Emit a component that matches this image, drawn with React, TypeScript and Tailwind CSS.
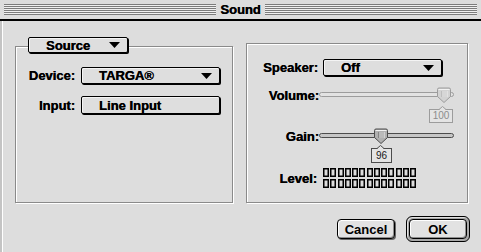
import React from 'react';

// Small black down-pointing triangle used by the popup menus
const Arrow = () => (
  <svg width="11" height="6" viewBox="0 0 11 6" className="shrink-0">
    <path d="M0 0H11L5.5 6Z" fill="#000" />
  </svg>
);

interface PopupProps {
  label: string;
  className: string;
  arrow?: boolean;
}

const Popup: React.FC<PopupProps> = ({ label, className, arrow = true }) => (
  <div
    className={`flex items-center justify-between pl-[17px] pr-[7px] bg-[#dedede] border border-black rounded-[2px] shadow-[1px_1px_0_#000,inset_1px_1px_0_#f4f4f4] ${className}`}
  >
    <span className="leading-none">{label}</span>
    {arrow && <Arrow />}
  </div>
);

const Thumb = ({ disabled }: { disabled?: boolean }) => {
  const stroke = disabled ? '#9c9c9c' : '#4c4c4c';
  const fill = disabled ? '#d2d2d2' : '#b0b0b0';
  const grip = disabled ? '#a8a8a8' : '#5a5a5a';
  return (
    <svg width="16" height="16" viewBox="0 0 16 16">
      <path d="M1.5 2.5Q1.5 1 3 1H13Q14.5 1 14.5 2.5V9.5L8 15.5L1.5 9.5Z" fill={fill} stroke={stroke} />
      <path d="M2.5 2.5H13.5" stroke="#f2f2f2" />
      <path d="M6 4V10M8 4V10M10 4V10" stroke={grip} />
      <path d="M7 4V10M9 4V10M11 4V10" stroke="#efefef" />
    </svg>
  );
};

interface SliderProps {
  value: number;
  disabled?: boolean;
  thumbClass: string;
  boxClass: string;
  notchClass: string;
}

// Horizontal slider with its value tag hanging under the thumb
const Slider: React.FC<SliderProps> = ({ value, disabled, thumbClass, boxClass, notchClass }) => (
  <div className="relative w-[135px] h-[16px]">
    <div
      className={`absolute left-0 right-0 top-[5px] h-[5px] rounded-full border ${
        disabled ? 'border-[#9c9c9c] bg-[#e2e2e2]' : 'border-[#4c4c4c] bg-[#c6c6c6]'
      }`}
    />
    <div className={`absolute top-0 ${thumbClass}`}>
      <Thumb disabled={disabled} />
    </div>
    <div
      className={`absolute flex items-center justify-center border bg-[#e4e4e4] font-['Liberation_Sans',Arial,sans-serif] font-normal text-[10px] leading-none [text-shadow:none] ${
        disabled ? 'border-[#9c9c9c] text-[#8c8c8c]' : 'border-[#4c4c4c] text-[#1a1a1a]'
      } ${boxClass}`}
    >
      {value}
    </div>
    <svg width="7" height="4" viewBox="0 0 7 4" className={`absolute ${notchClass}`}>
      <path d="M0 4L3.5 0.5L7 4Z" fill="#e4e4e4" />
      <path d="M0 3.5L3.5 0.5L7 3.5" fill="none" stroke={disabled ? '#9c9c9c' : '#4c4c4c'} />
    </svg>
  </div>
);

const Stripes = () => (
  <div className="flex-1 h-[11px] bg-[repeating-linear-gradient(to_bottom,#7c7c7c_0px,#7c7c7c_1px,#f0f0f0_1px,#f0f0f0_2px)]" />
);

const LevelMeter = () => (
  <div className="grid grid-cols-[repeat(13,6px)] gap-x-[1.25px] gap-y-[2px]">
    {Array.from({ length: 26 }).map((_, i) => (
      <div key={i} className="h-[9px] shadow-[inset_0_0_0_1.5px_#000]" />
    ))}
  </div>
);

export default function App() {
  return (
    <div className="w-[481px] h-[252px] bg-[#dddddd] flex flex-col overflow-hidden font-['Liberation_Sans',Arial,sans-serif] font-bold text-[13px] text-black [text-shadow:0.35px_0_0_#000]">
      {/* Title bar */}
      <div className="h-[19px] flex items-center gap-[3px] px-[4px]">
        <Stripes />
        <span className="leading-none px-[1px]">Sound</span>
        <Stripes />
      </div>
      <div className="h-[2px] bg-black" />

      {/* Body */}
      <div className="flex-1 flex flex-col shadow-[inset_2px_0_0_#c4c4c4,inset_3px_0_0_#ffffff]">
        <div className="flex items-end gap-[13px] pl-[15px] pt-[22px]">
          {/* Source group */}
          <div className="w-[218px] h-[157px] flex flex-col border border-[#8a8a8a] shadow-[1px_1px_0_#fff,inset_1px_1px_0_#fff]">
            <Popup label="Source" className="-mt-[10px] ml-[12px] w-[100px] h-[16px]" />
            <div className="mt-[14px] flex items-center">
              <span className="w-[59px] text-right leading-none">Device:</span>
              <Popup label="TARGA®" className="ml-[6px] w-[139px] h-[17px]" />
            </div>
            <div className="mt-[12px] flex items-center">
              <span className="w-[59px] text-right leading-none">Input:</span>
              <Popup label="Line Input" arrow={false} className="ml-[6px] w-[139px] h-[18px]" />
            </div>
          </div>

          {/* Output group */}
          <div className="w-[222px] h-[160px] flex flex-col border border-[#8a8a8a] shadow-[1px_1px_0_#fff,inset_1px_1px_0_#fff]">
            <div className="mt-[15px] flex items-center">
              <span className="w-[71px] text-right leading-none">Speaker:</span>
              <Popup label="Off" className="ml-[5px] w-[119px] h-[17px]" />
            </div>
            <div className="mt-[11px] flex items-center">
              <span className="w-[72px] text-right leading-none">Volume:</span>
              <Slider
                value={100}
                disabled
                thumbClass="left-[117px]"
                boxClass="left-[110px] top-[22px] w-[24px] h-[14px]"
                notchClass="left-[120px] top-[19px]"
              />
            </div>
            <div className="mt-[25px] flex items-center">
              <span className="w-[72px] text-right leading-none">Gain:</span>
              <Slider
                value={96}
                thumbClass="left-[54px]"
                boxClass="left-[52px] top-[20px] w-[21px] h-[15px]"
                notchClass="left-[58px] top-[17px]"
              />
            </div>
            <div className="mt-[24px] flex items-center">
              <span className="w-[70px] text-right leading-none">Level:</span>
              <div className="ml-[6px]">
                <LevelMeter />
              </div>
            </div>
          </div>
        </div>

        {/* Buttons */}
        <div className="mt-[13px] flex items-center justify-end gap-[11px] pr-[11px]">
          <button className="w-[58px] h-[20px] rounded-[4px] border border-black bg-[#e2e2e2] leading-none shadow-[inset_1px_1px_0_#fff,inset_-1px_-1px_0_#8e8e8e,1px_1px_0_#666]">
            Cancel
          </button>
          <div className="w-[64px] h-[26px] rounded-[6px] border border-black bg-[#a8a8a8] p-[2px] shadow-[inset_1px_1px_0_#e0e0e0]">
            <button className="w-full h-full rounded-[4px] border border-black bg-[#e2e2e2] leading-none shadow-[inset_1px_1px_0_#fff,inset_-1px_-1px_0_#8e8e8e]">
              OK
            </button>
          </div>
        </div>
      </div>
    </div>
  );
}
